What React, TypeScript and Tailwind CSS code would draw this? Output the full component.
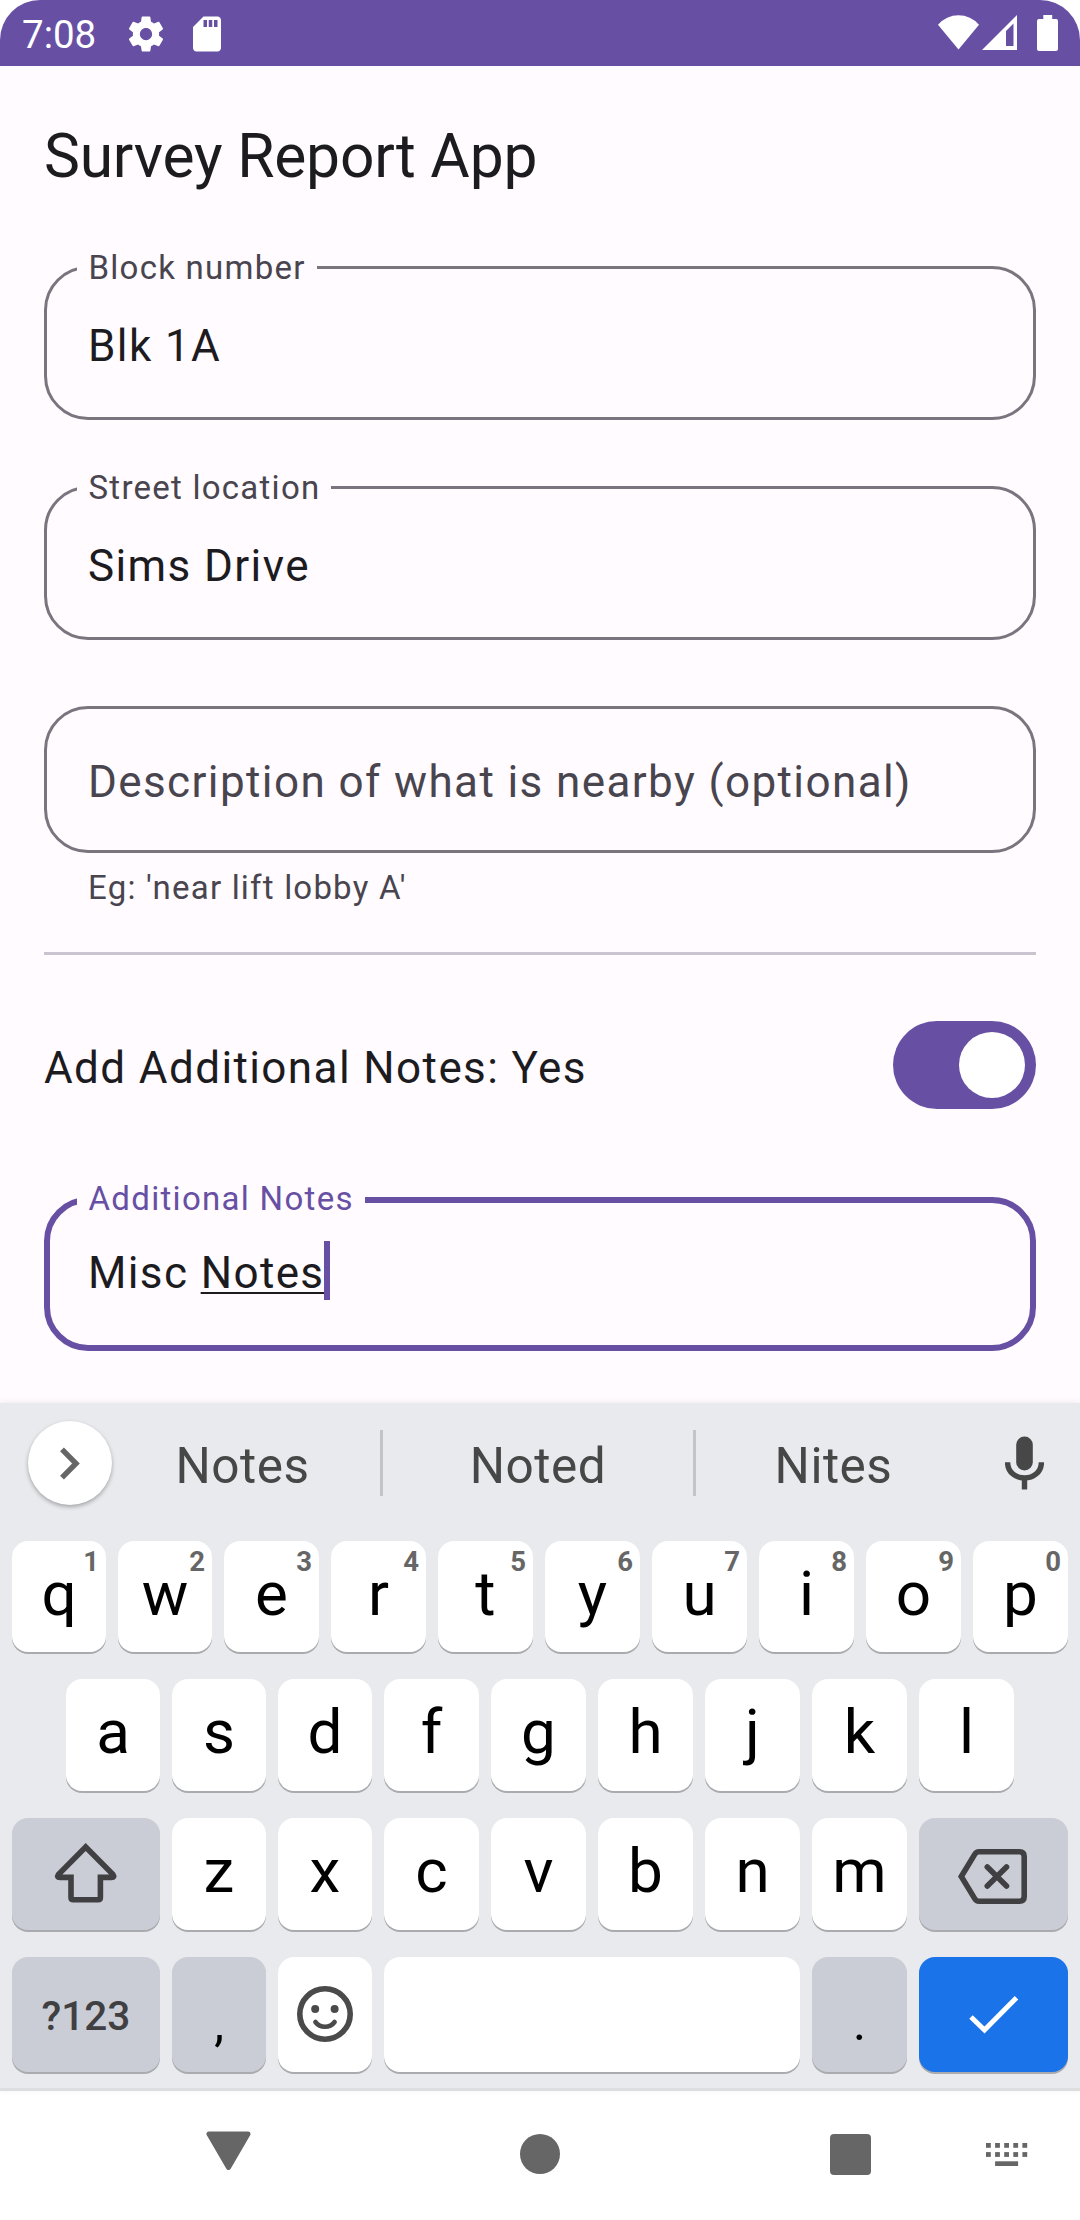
import React from "react";

function StatusBar() {
  return (
    <header className="flex h-[66px] shrink-0 items-start justify-between rounded-t-[40px] bg-[#6750a4] pl-[22px] pr-[22px] text-white">
      <div className="flex items-start">
        <span className="w-[74px] text-[38.5px] leading-[70px]">7:08</span>
        <svg className="ml-[29px] mt-[12.5px] size-[42px]" viewBox="0 0 24 24" fill="currentColor">
          <path d="M19.43 12.98c.04-.32.07-.64.07-.98s-.03-.66-.07-.98l2.11-1.65c.19-.15.24-.42.12-.64l-2-3.46c-.12-.22-.39-.3-.61-.22l-2.49 1c-.52-.4-1.08-.73-1.69-.98l-.38-2.65C14.46 2.18 14.25 2 14 2h-4c-.25 0-.46.18-.49.42l-.38 2.65c-.61.25-1.17.59-1.69.98l-2.49-1c-.23-.09-.49 0-.61.22l-2 3.46c-.13.22-.07.49.12.64l2.11 1.65c-.04.32-.07.65-.07.98s.03.66.07.98l-2.11 1.65c-.19.15-.24.42-.12.64l2 3.46c.12.22.39.3.61.22l2.49-1c.52.4 1.08.73 1.69.98l.38 2.65c.03.24.24.42.49.42h4c.25 0 .46-.18.49-.42l.38-2.65c.61-.25 1.17-.59 1.69-.98l2.49 1c.23.09.49 0 .61-.22l2-3.46c.12-.22.07-.49-.12-.64l-2.11-1.65zM12 15.5c-1.93 0-3.5-1.57-3.5-3.5s1.57-3.5 3.5-3.5 3.5 1.57 3.5 3.5-1.57 3.5-3.5 3.5z" />
        </svg>
        <svg className="ml-[19px] mt-[12.5px] size-[42px]" viewBox="0 0 24 24" fill="currentColor">
          <path d="M18 2h-8L4.02 8 4 20c0 1.1.9 2 2 2h12c1.1 0 2-.9 2-2V4c0-1.1-.9-2-2-2zm-6 6h-2V4h2v4zm3 0h-2V4h2v4zm3 0h-2V4h2v4z" />
        </svg>
      </div>
      <div className="flex items-start pt-[15px]">
        <svg width="41" height="35" viewBox="0 0 41 35" fill="currentColor">
          <path d="M0 9.7A27 27 0 0 1 41 9.7L20.5 34.5z" />
        </svg>
        <svg className="ml-[3px]" width="35" height="35" viewBox="0 0 35 35" fill="currentColor">
          <path fillRule="evenodd" d="M0 35L35 0V35zM24 16V31H31.5V8.5z" />
        </svg>
        <svg className="ml-[20px]" width="21" height="36" viewBox="0 0 21 36" fill="currentColor">
          <path d="M6.3 0H15.2V4H19.2Q21 4 21 6V34Q21 36 19 36H2Q0 36 0 34V6Q0 4 2 4H6.3z" />
        </svg>
      </div>
    </header>
  );
}

function OutlinedField({ label, value }: { label: string; value: string }) {
  return (
    <div className="relative h-[154px] rounded-[44px] border-[3px] border-[#79747e] pl-[41px] pt-[44px]">
      <label className="absolute -top-[23px] left-[30px] bg-[#fffbfe] pl-[11.5px] pr-[11px] text-[33px] leading-[44px] tracking-[1.25px] text-[#49454f]">
        {label}
      </label>
      <div className="text-[44px] leading-[66px] tracking-[1.4px]">{value}</div>
    </div>
  );
}

function Form() {
  return (
    <main className="flex h-[1337px] shrink-0 flex-col bg-[#fffbfe] px-[44px] pt-[52px] text-[#1c1b1f]">
      <h1 className="text-[60.5px] leading-[77px] tracking-[-0.2px]">Survey Report App</h1>
      <div className="mt-[71px] flex flex-col gap-[66px]">
        <OutlinedField label="Block number" value="Blk 1A" />
        <OutlinedField label="Street location" value="Sims Drive" />
        <div className="h-[147px] rounded-[44px] border-[3px] border-[#79747e] pl-[41px] pt-[40px] text-[44px] leading-[66px] tracking-[1.4px] text-[#49454f]">
          Description of what is nearby (optional)
        </div>
      </div>
      <p className="mt-[13px] pl-[44px] text-[33px] leading-[44px] tracking-[1.2px] text-[#49454f]">
        Eg: 'near lift lobby A'
      </p>
      <div className="mt-[42px] h-[3px] shrink-0 bg-[#cac4d0]" />
      <div className="mt-[66px] flex h-[88px] items-center justify-between">
        <span className="mt-1.5 text-[44px] leading-[66px] tracking-[1.4px]">Add Additional Notes: Yes</span>
        <div className="flex h-[88px] w-[143px] items-center justify-end rounded-full bg-[#6750a4] pr-[11px]">
          <div className="size-[66px] rounded-full bg-white" />
        </div>
      </div>
      <div className="relative mt-[88px] h-[154px] shrink-0 rounded-[44px] border-[6px] border-[#6750a4] pl-[38px] pt-[37px]">
        <label className="absolute -top-[26px] left-[27px] bg-[#fffbfe] pl-[11.5px] pr-[11px] text-[33px] leading-[44px] tracking-[1.3px] text-[#6750a4]">
          Additional Notes
        </label>
        <div className="flex items-start text-[44px] leading-[66px] tracking-[1.375px]">
          <span className="whitespace-pre">
            Misc{" "}
            <span className="underline decoration-[2px] underline-offset-[4px] [text-decoration-skip-ink:none]">Notes</span>
          </span>
          <span className="mt-px h-[59px] w-[6px] bg-[#6750a4]" />
        </div>
      </div>
    </main>
  );
}

const keyBase = "relative flex shrink-0 justify-center rounded-[16px] shadow-[0_2px_0_#a9abae]";

function LetterKey({ char, hint, narrow }: { char: string; hint?: string; narrow?: boolean }) {
  return (
    <div className={`${keyBase} ${narrow ? "w-[94px]" : "w-[95px]"} bg-white text-[62px] leading-[106px] text-black`}>
      {char}
      {hint && (
        <span className="absolute right-[7px] top-[4px] text-[27.5px] font-bold leading-[34px] text-[#666]">{hint}</span>
      )}
    </div>
  );
}

function SuggestionStrip() {
  const word = "flex-1 pt-[6px] text-center text-[49.5px] leading-[58px] tracking-[0.5px] text-[#474747]";
  return (
    <div className="flex h-[120px] items-center">
      <div className="ml-[28px] flex size-[84px] shrink-0 items-center justify-center rounded-full bg-white shadow-[0_2px_4px_rgba(0,0,0,0.3)]">
        <svg width="20" height="33" viewBox="0 0 20 33" fill="none" stroke="#666" strokeWidth="5.4">
          <path d="M2 2.4L16 16.5L2 30.6" />
        </svg>
      </div>
      <div className="ml-[-7px] flex w-[866px] items-center">
        <span className={word}>Notes</span>
        <div className="h-[66px] w-[3px] bg-[#c2c4c8]" />
        <span className="w-[310px] pt-[6px] text-center text-[49.5px] leading-[58px] tracking-[0.5px] text-[#474747]">Noted</span>
        <div className="h-[66px] w-[3px] bg-[#c2c4c8]" />
        <span className={word}>Nites</span>
      </div>
      <svg className="ml-[34px]" width="39" height="54" viewBox="0 0 39 54">
        <rect x="11.2" y="0.5" width="16.6" height="34" rx="8.3" fill="#474747" />
        <path d="M2.6 26.3C2.6 36 10.5 42 19.5 42S36.4 36 36.4 26.3M19.5 42V53.5" fill="none" stroke="#474747" strokeWidth="5.4" />
      </svg>
    </div>
  );
}

function Keyboard() {
  const top = ["q", "w", "e", "r", "t", "y", "u", "i", "o", "p"];
  return (
    <section className="relative flex h-[688px] shrink-0 flex-col border-b-[3px] border-[#dddee0] bg-[#e8eaed] shadow-[0_-1px_6px_rgba(0,0,0,0.07)]">
      <SuggestionStrip />
      <div className="mt-[18px] flex flex-col px-[12px]">
        <div className="flex h-[111px] gap-[12px]">
          {top.map((c, i) => (
            <LetterKey key={c} char={c} hint={String((i + 1) % 10)} narrow={i < 2} />
          ))}
        </div>
        <div className="mt-[27px] flex h-[112px] gap-[12px] px-[54px]">
          {["a", "s", "d", "f", "g", "h", "j", "k", "l"].map((c, i) => (
            <LetterKey key={c} char={c} narrow={i < 3} />
          ))}
        </div>
        <div className="mt-[27px] flex h-[112px] gap-[12px]">
          <div className={`${keyBase} w-[148px] bg-[#cbcdd6]`}>
            <svg width="148" height="112" viewBox="0 0 148 112" fill="none" stroke="#404042" strokeWidth="5.6">
              <path d="M73.7 29L101 56.5Q103 59.4 99.5 59.4H88.4V79.5Q88.4 81.7 86.2 81.7H61.2Q59 81.7 59 79.5V59.4H47.9Q44.4 59.4 46.4 56.5z" />
            </svg>
          </div>
          {["z", "x", "c", "v", "b", "n", "m"].map((c, i) => (
            <LetterKey key={c} char={c} narrow={i < 2} />
          ))}
          <div className={`${keyBase} w-[149px] bg-[#cbcdd6]`}>
            <svg width="149" height="112" viewBox="0 0 149 112" fill="none" stroke="#404042" strokeWidth="5.6">
              <path d="M42.3 58.5L55.7 36.4Q57.3 33.8 60 33.8H100.5Q105.2 33.8 105.2 38.5V78.5Q105.2 83.2 100.5 83.2H60Q57.3 83.2 55.7 80.6z" />
              <path strokeLinecap="round" d="M68.3 49L87.5 68M87.5 49L68.3 68" />
            </svg>
          </div>
        </div>
        <div className="mt-[27px] flex h-[115px] gap-[12px]">
          <div className={`${keyBase} w-[148px] bg-[#cbcdd6] text-[40.5px] font-medium leading-[118px] text-[#404042]`}>?123</div>
          <div className={`${keyBase} w-[94px] bg-[#cbcdd6] text-[49.5px] leading-[132px] text-black`}>,</div>
          <div className={`${keyBase} w-[94px] bg-white`}>
            <svg width="94" height="115" viewBox="0 0 94 115" fill="none" stroke="#4a4a4a">
              <circle cx="47" cy="57" r="25.2" strokeWidth="5.6" />
              <circle cx="37.2" cy="52" r="4" fill="#4a4a4a" stroke="none" />
              <circle cx="56.6" cy="52" r="4" fill="#4a4a4a" stroke="none" />
              <path d="M37.4 65Q41 69.8 47 69.8T56.6 65" strokeWidth="4.6" strokeLinecap="round" />
            </svg>
          </div>
          <div className={`${keyBase} w-[416px] bg-white`} />
          <div className={`${keyBase} w-[95px] bg-[#cbcdd6] text-[49.5px] leading-[132px] text-black`}>.</div>
          <div className={`${keyBase} w-[149px] bg-[#1a73e8]`}>
            <svg width="149" height="115" viewBox="0 0 149 115" fill="none" stroke="#fff" strokeWidth="5">
              <path d="M52 60L65.5 73L97.5 40.8" />
            </svg>
          </div>
        </div>
      </div>
    </section>
  );
}

function NavigationBar() {
  return (
    <nav className="flex h-[129px] shrink-0 items-start bg-white pl-[206px] text-[#666]">
      <svg className="mt-[40px]" width="45" height="40" viewBox="0 0 45 40" fill="currentColor" stroke="currentColor" strokeWidth="5" strokeLinejoin="round">
        <path d="M3 3H42L22.5 36.5z" />
      </svg>
      <div className="ml-[269px] mt-[43px] size-[40px] rounded-full bg-[#666]" />
      <div className="ml-[270px] mt-[43px] size-[41px] rounded-[4px] bg-[#666]" />
      <svg className="ml-[115px] mt-[52px]" width="42" height="23" viewBox="0 0 42 23" fill="currentColor">
        {[0, 9.1, 18.2, 27.3, 36.4].map((x) => (
          <React.Fragment key={x}>
            <rect x={x} y="0" width="4.8" height="4.8" />
            <rect x={x} y="9.1" width="4.8" height="4.8" />
          </React.Fragment>
        ))}
        <rect x="9.1" y="18.3" width="23" height="4.7" />
      </svg>
    </nav>
  );
}

export default function App() {
  return (
    <div className="flex h-[2220px] w-[1080px] flex-col overflow-hidden bg-white font-['Roboto',sans-serif]">
      <StatusBar />
      <Form />
      <Keyboard />
      <NavigationBar />
    </div>
  );
}
